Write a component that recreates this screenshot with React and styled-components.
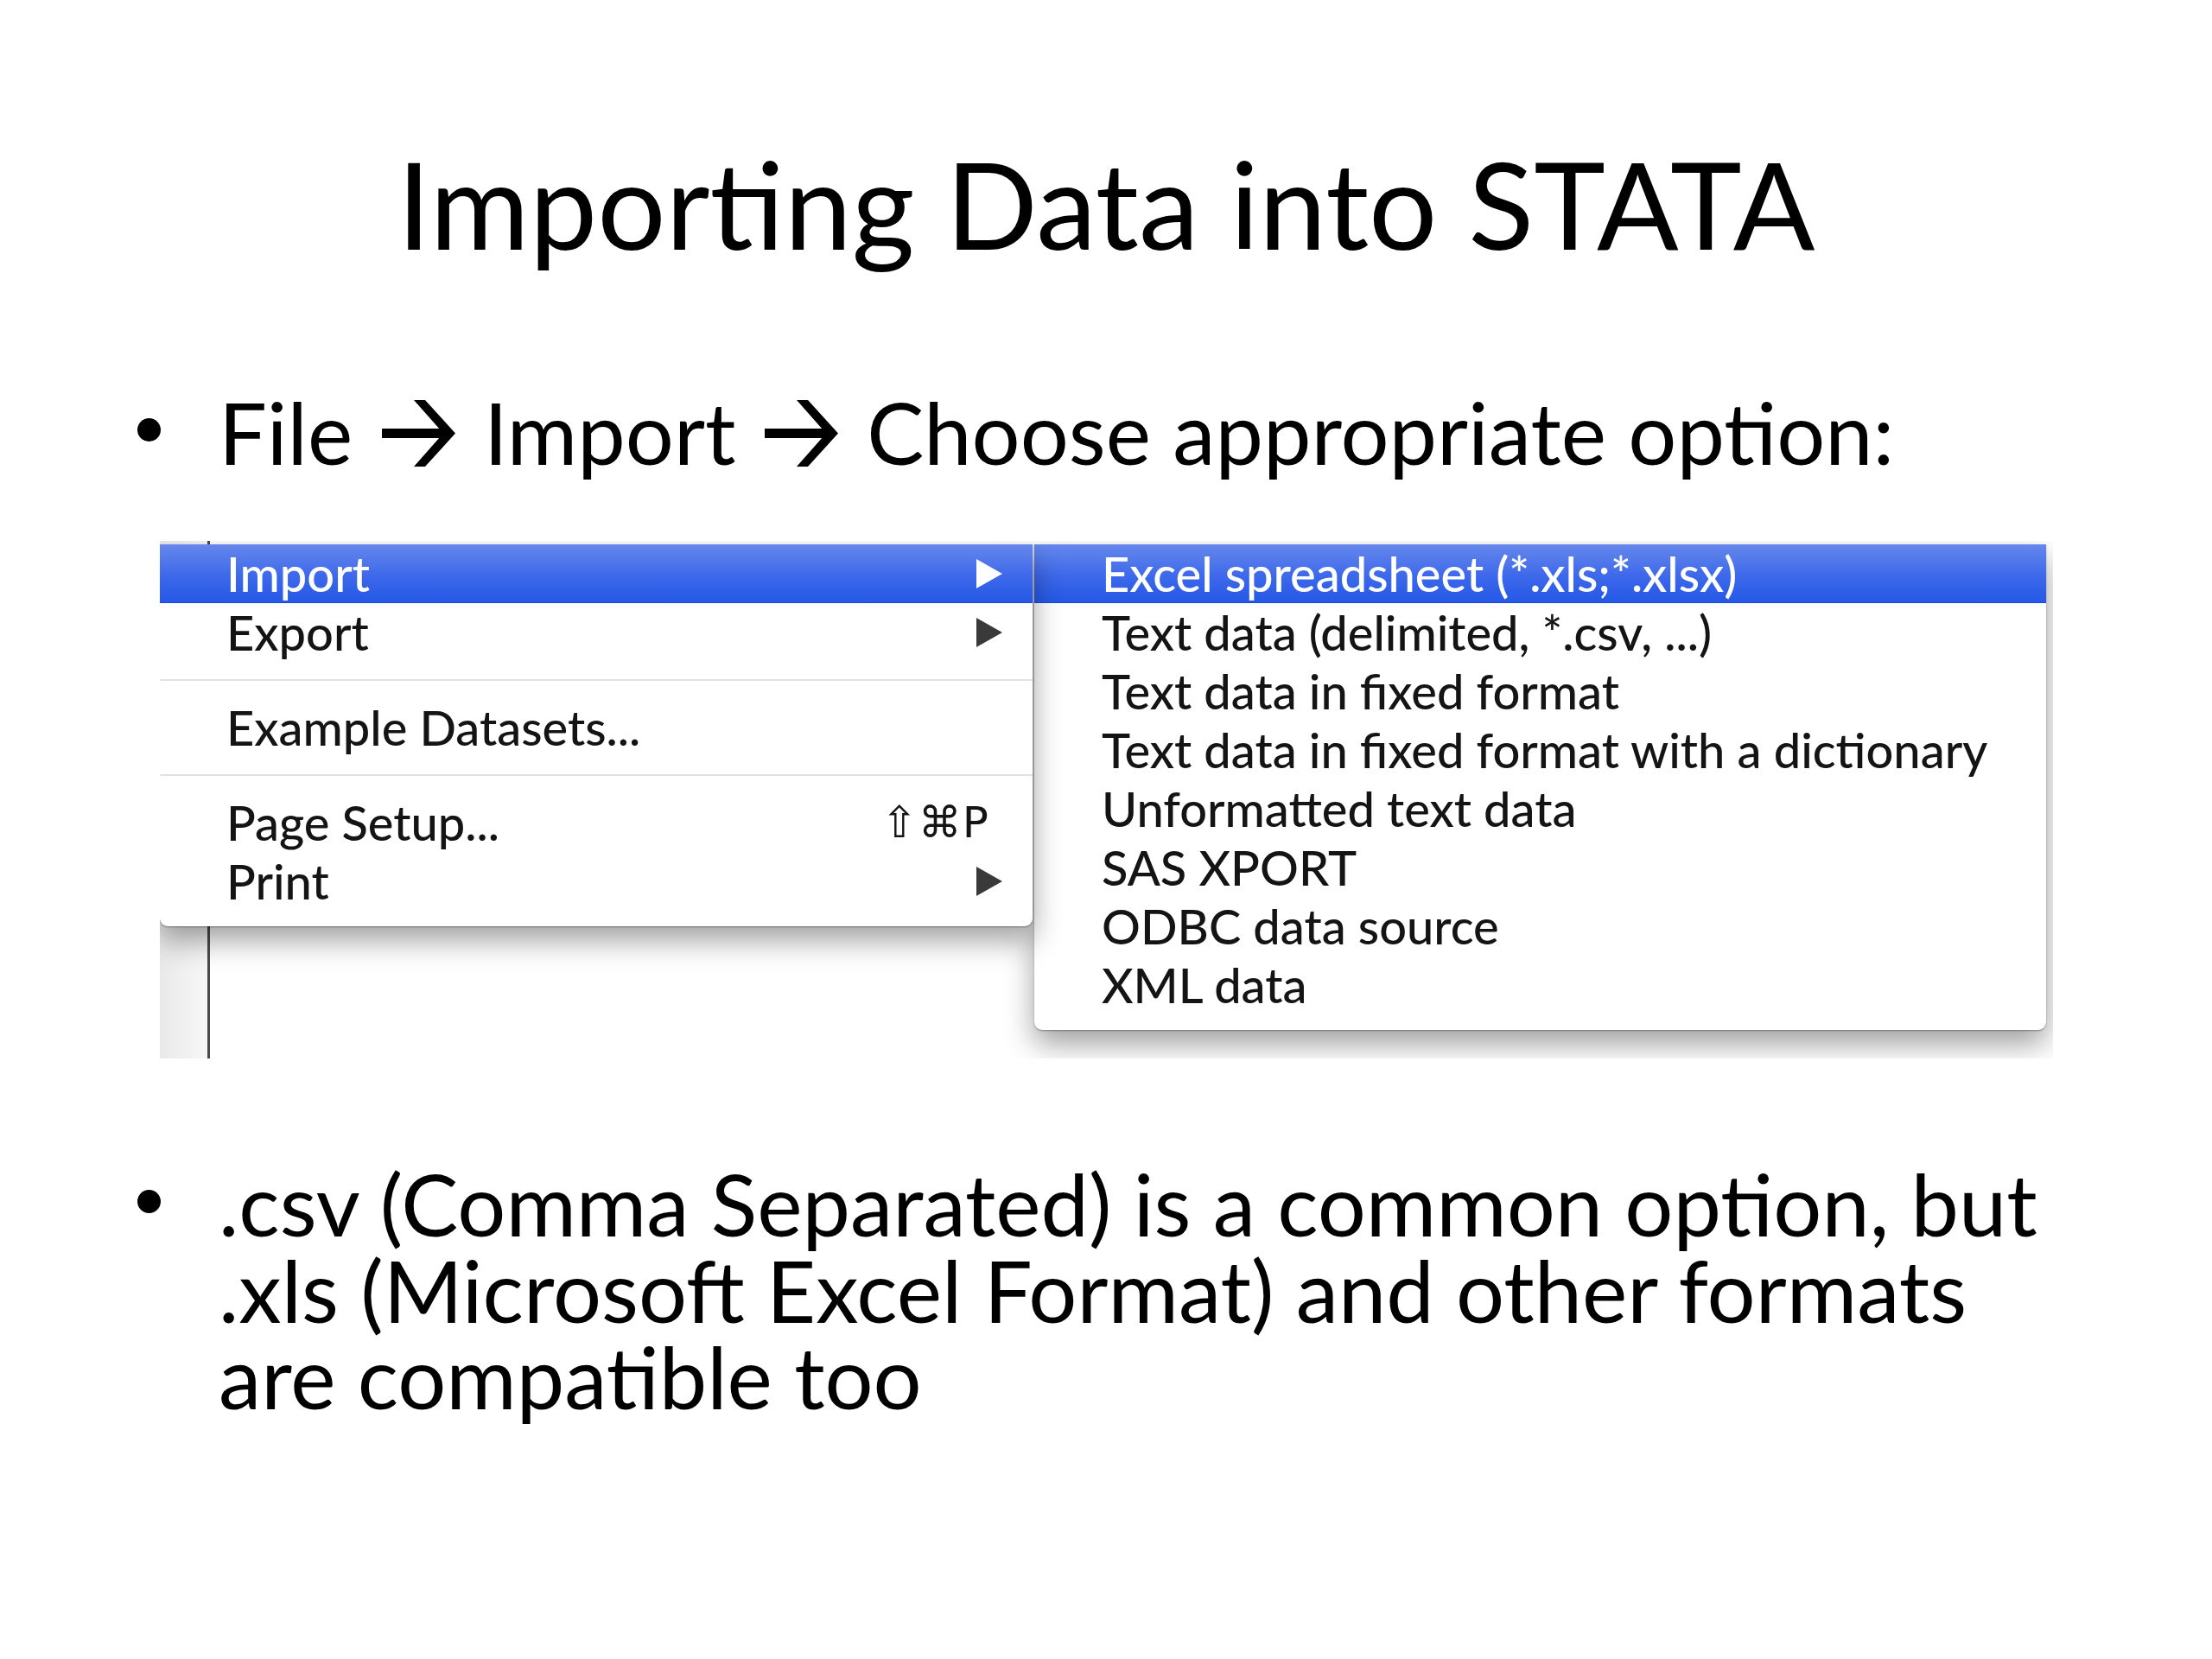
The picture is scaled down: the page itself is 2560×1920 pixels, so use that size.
import React from "react";
import styled, { createGlobalStyle } from "styled-components";

const GlobalStyle = createGlobalStyle`
  html, body {
    margin: 0;
    padding: 0;
    background: #fff;
  }
  body {
    font-family: "Lato", "Open Sans", sans-serif;
    color: #000;
  }
`;

const importItems = [
  "Excel spreadsheet (*.xls;*.xlsx)",
  "Text data (delimited, *.csv, ...)",
  "Text data in fixed format",
  "Text data in fixed format with a dictionary",
  "Unformatted text data",
  "SAS XPORT",
  "ODBC data source",
  "XML data"
];

function Arrow() {
  return (
    <ArrowSvg viewBox="0 0 85 77">
      <rect x="0" y="33" width="72" height="11" />
      <polygon points="37,0 50,0 85,38.5 50,77 37,77 71,38.5" />
    </ArrowSvg>
  );
}

function FileMenu() {
  return (
    <LeftMenu>
      <Row active>
        <span>Import</span>
        <Triangle active />
      </Row>
      <Row>
        <span>Export</span>
        <Triangle />
      </Row>
      <Separator />
      <Row>
        <span>Example Datasets...</span>
      </Row>
      <Separator />
      <Row shortcut>
        <span>Page Setup...</span>
        <Shortcut>⇧⌘P</Shortcut>
      </Row>
      <Row>
        <span>Print</span>
        <Triangle />
      </Row>
    </LeftMenu>
  );
}

function ImportMenu() {
  return (
    <SubMenu>
      {importItems.map((label, i) => (
        <Row key={label} active={i === 0} sub>
          <span>{label}</span>
        </Row>
      ))}
    </SubMenu>
  );
}

export default function App() {
  return (
    <>
      <GlobalStyle />
      <Slide>
        <Title>Importing Data into STATA</Title>
        <Bullets>
          <Item>
            <Dot />
            <Text>
              File <Arrow /> Import <Arrow /> Choose appropriate option:
            </Text>
          </Item>
        </Bullets>
        <Screenshot>
          <Menus>
            <FileMenu />
            <ImportMenu />
          </Menus>
        </Screenshot>
        <Bullets second>
          <Item>
            <Dot />
            <Text>
              <Line>.csv (Comma Separated) is a common option, but</Line>
              <Line>.xls (Microsoft Excel Format) and other formats</Line>
              <Line>are compatible too</Line>
            </Text>
          </Item>
        </Bullets>
      </Slide>
    </>
  );
}

const Slide = styled.div`
  width: 2560px;
  height: 1920px;
  box-sizing: border-box;
  padding-top: 165px;
  background: #fff;
  overflow: hidden;
`;

const Title = styled.h1`
  margin: 0;
  font-family: "Lato", sans-serif;
  font-weight: 400;
  font-size: 140px;
  line-height: 140px;
  text-align: center;
  color: #000;
`;

const Bullets = styled.ul`
  list-style: none;
  margin: ${(p) => (p.second ? "118px 0 0" : "145px 0 0")};
  padding: 0;
`;

const Item = styled.li`
  display: grid;
  grid-template-columns: 27px 1fr;
  column-gap: 67px;
  padding-left: 159px;
  align-items: start;
`;

const Dot = styled.span`
  width: 27px;
  height: 27px;
  margin-top: 34px;
  border-radius: 50%;
  background: #000;
`;

const Text = styled.p`
  margin: 0;
  font-family: "Lato", sans-serif;
  font-size: 99px;
  line-height: 100px;
  white-space: nowrap;
  color: #000;
`;

const Line = styled.span`
  display: block;
  height: 100px;
  overflow: visible;
`;

const ArrowSvg = styled.svg`
  width: 85px;
  height: 77px;
  margin: 0 8px;
  vertical-align: -2px;
  fill: #000;
`;

const Screenshot = styled.div`
  margin: 76px 0 0 185px;
  width: 2191px;
  height: 599px;
  position: relative;
  overflow: hidden;
  background:
    linear-gradient(#4a4a4a, #4a4a4a) 55px 0 / 3px 100% no-repeat,
    linear-gradient(to right, #e9e9e9, #f7f7f7) 0 0 / 55px 100% no-repeat,
    #fff;
`;

const Menus = styled.div`
  display: flex;
  align-items: flex-start;
  padding-top: 4px;
`;

const MenuPanel = styled.div`
  background: #fff;
  border-radius: 0 0 9px 9px;
  padding-bottom: 18px;
  box-shadow: 0 16px 34px rgba(0, 0, 0, 0.38), 0 1px 2px rgba(0, 0, 0, 0.35);
`;

const LeftMenu = styled(MenuPanel)`
  width: 1010px;
  position: relative;
  z-index: 2;
`;

const SubMenu = styled(MenuPanel)`
  width: 1171px;
  margin-left: 2px;
  position: relative;
  z-index: 1;
`;

const Row = styled.div`
  height: 68px;
  box-sizing: border-box;
  display: flex;
  align-items: center;
  justify-content: space-between;
  padding: ${(p) =>
    p.sub ? "0 30px 0 78px" : p.shortcut ? "0 50px 0 77px" : "0 35px 0 77px"};
  font-family: "Lato", sans-serif;
  font-size: 56px;
  font-weight: 500;
  line-height: 1;
  white-space: nowrap;
  color: ${(p) => (p.active ? "#fff" : "#141414")};
  background: ${(p) =>
    p.active ? "linear-gradient(#6688ec, #3d68ea 55%, #2458e6)" : "transparent"};
  border-bottom: 1px solid ${(p) => (p.active ? "#1c4bd4" : "transparent")};
`;

const Triangle = styled.span`
  width: 0;
  height: 0;
  border-top: 17px solid transparent;
  border-bottom: 17px solid transparent;
  border-left: 30px solid ${(p) => (p.active ? "#fff" : "#3a3a3a")};
`;

const Shortcut = styled.span`
  font-family: "DejaVu Sans", sans-serif;
  font-size: 50px;
  line-height: 1;
  letter-spacing: 1px;
  color: #141414;
`;

const Separator = styled.div`
  height: 42px;
  display: flex;
  align-items: center;

  &::after {
    content: "";
    flex: 1;
    height: 2px;
    background: #e2e2e2;
  }
`;
